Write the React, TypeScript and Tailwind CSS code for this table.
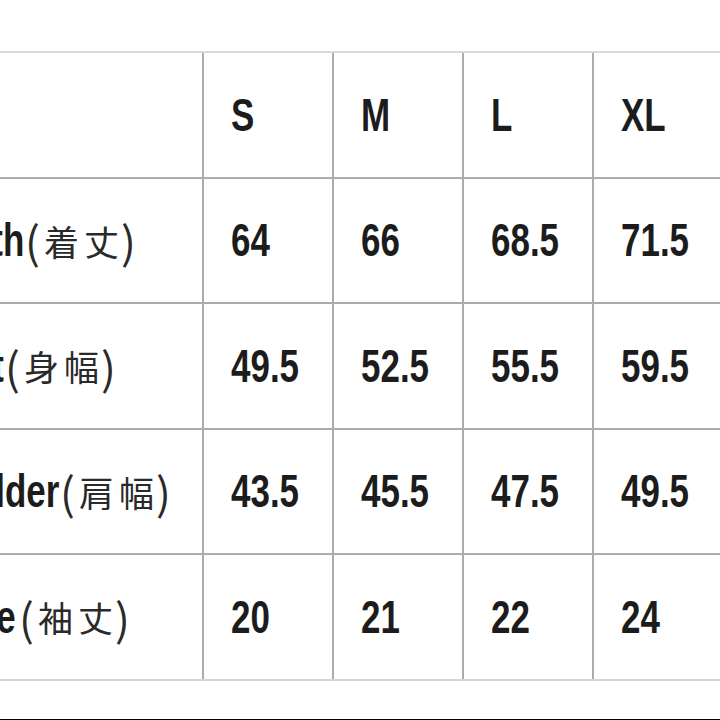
const sizes = ["S", "M", "L", "XL"];

// latinEnd: where the (cut-off) English word ends; gap: space before "("
const rows = [
  { en: "Length", ja: ["着", "丈"], latinEnd: 24, gap: 1, values: ["64", "66", "68.5", "71.5"] },
  { en: "Chest", ja: ["身", "幅"], latinEnd: 4, gap: 1, values: ["49.5", "52.5", "55.5", "59.5"] },
  { en: "Shoulder", ja: ["肩", "幅"], latinEnd: 59, gap: 1, values: ["43.5", "45.5", "47.5", "49.5"] },
  { en: "Sleeve", ja: ["袖", "丈"], latinEnd: 16, gap: 3, values: ["20", "21", "22", "24"] },
];

const latin =
  "inline-block scale-x-[0.76] font-['Liberation_Sans',sans-serif] font-bold text-[46px] leading-none text-[#1c1c1c] whitespace-nowrap";
const cjkFont = "font-['Noto_Sans_CJK_JP','Noto_Sans_CJK_SC',sans-serif] font-normal leading-none text-[#2a2a2a]";

function Row({ label, cells, last }: { label: React.ReactNode; cells: string[]; last?: boolean }) {
  return (
    <div className={`flex h-[125.5px] border-b-2 ${last ? "border-[#d4d4d4]" : "border-[#ababab]"}`}>
      <div className="w-[204px] shrink-0 border-r-2 border-[#ababab] flex items-center">{label}</div>
      {cells.map((c, i) => (
        <div key={i} className="w-[130px] shrink-0 border-r-2 border-[#ababab] flex items-center pl-[27px]">
          <span className={`${latin} origin-left`}>{c}</span>
        </div>
      ))}
    </div>
  );
}

export default function App() {
  return (
    <div className="w-[720px] h-[720px] overflow-hidden bg-white flex flex-col">
      <div className="pt-[51px] w-[800px]">
        <div className="border-t-2 border-[#d9d9d9]">
          <Row label={null} cells={sizes} />
          {rows.map((r, i) => (
            <Row
              key={r.en}
              last={i === rows.length - 1}
              cells={r.values}
              label={
                <div className="flex items-center whitespace-nowrap">
                  <div className="flex justify-end shrink-0" style={{ width: r.latinEnd }}>
                    <span className={`${latin} origin-right`}>{r.en}</span>
                  </div>
                  <span className={`${cjkFont} text-[44px] font-light`} style={{ marginLeft: r.gap }}>(</span>
                  <span className={`${cjkFont} text-[35px] ml-[4px]`}>{r.ja[0]}</span>
                  <span className={`${cjkFont} text-[35px] ml-[5px]`}>{r.ja[1]}</span>
                  <span className={`${cjkFont} text-[44px] font-light ml-[2px]`}>)</span>
                </div>
              }
            />
          ))}
        </div>
      </div>
      <div className="flex-1" />
      <div className="h-px bg-black" />
    </div>
  );
}
